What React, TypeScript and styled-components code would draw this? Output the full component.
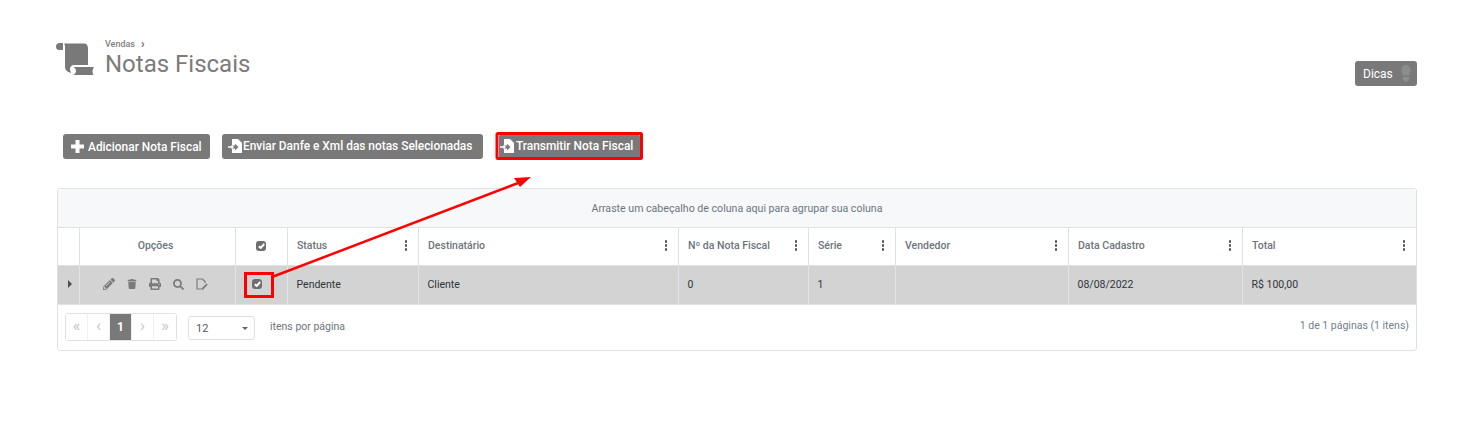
import { createGlobalStyle, styled } from "styled-components";
import { FaPencilAlt, FaPrint, FaSearch, FaTrash } from "react-icons/fa";

const GlobalStyle = createGlobalStyle`
  html, body { margin: 0; padding: 0; background: #fff; }
  body { font-family: Roboto, "Liberation Sans", sans-serif; overflow: hidden; }
`;

const COLUMNS = "22px 156px 52px 131px 260px 130px 87px 173px 174px 173px";
const GREY = "#797979";
const LINE = "#dee2e6";

const Page = styled.div`
  position: relative;
  width: 1459px;
  height: 439px;
  box-sizing: border-box;
  padding: 38px 42px 0 57px;
`;

const Header = styled.header`
  display: flex;
  justify-content: space-between;
  height: 96px;
`;

const TitleGroup = styled.div`
  display: flex;
  gap: 11px;
`;

const TitleText = styled.div`
  display: flex;
  flex-direction: column;
`;

const Crumb = styled.div`
  display: flex;
  align-items: center;
  gap: 6px;
  height: 12px;
  font-size: 9px;
  font-weight: 500;
  color: #7f7f7f;
  & > b {
    font-size: 12px;
    line-height: 10px;
    color: #6a6a6a;
  }
`;

const Title = styled.h1`
  margin: 0;
  font-size: 24px;
  line-height: 28px;
  font-weight: 400;
  color: #7b7b7b;
`;

const Dicas = styled.button`
  display: flex;
  align-items: center;
  gap: 8px;
  margin-top: 23px;
  width: 62px;
  height: 25px;
  padding: 0 0 0 8px;
  border: 0;
  border-radius: 3px;
  background: ${GREY};
  color: #fff;
  font: 400 12px Roboto, sans-serif;
`;

const Toolbar = styled.div`
  display: flex;
  gap: 12px;
  padding-left: 6px;
  height: 54px;
`;

const ActionButton = styled.button<{ $w: number; $pad: number; $gap: number; $after?: number; $lift?: boolean }>`
  display: flex;
  align-items: center;
  gap: ${(p) => p.$gap}px;
  box-sizing: border-box;
  width: ${(p) => p.$w}px;
  height: 25px;
  padding: 0 0 ${(p) => (p.$lift ? 2 : 0)}px ${(p) => p.$pad}px;
  border: 0;
  border-radius: 3px;
  background: ${GREY};
  color: #fff;
  font: 500 11.9px Roboto, sans-serif;
  white-space: nowrap;
  margin-left: ${(p) => p.$after ?? 0}px;
`;

const Card = styled.section`
  width: 1360px;
  box-sizing: border-box;
  border: 1px solid ${LINE};
  border-radius: 3px;
  color: #6c757d;
  font-size: 10.5px;
`;

const GroupBar = styled.div`
  height: 38px;
  display: flex;
  align-items: center;
  justify-content: center;
  background: #f7f8fa;
  border-bottom: 1px solid ${LINE};
  font-size: 10.6px;
  color: #6b7680;
`;

const Row = styled.div<{ $head?: boolean }>`
  display: grid;
  grid-template-columns: ${COLUMNS};
  height: ${(p) => (p.$head ? 37 : 38)}px;
  background: ${(p) => (p.$head ? "#fff" : "#d3d3d3")};
  border-bottom: 1px solid ${LINE};
  color: ${(p) => (p.$head ? "#6c757d" : "#2f3439")};
`;

const Cell = styled.div<{ $head?: boolean }>`
  display: flex;
  align-items: center;
  justify-content: space-between;
  box-sizing: border-box;
  padding: 0 11px 2px ${(p) => (p.$head ? 9 : 8.5)}px;
  border-right: 1px solid ${(p) => (p.$head ? LINE : "#e4e4e4")};
  font-weight: ${(p) => (p.$head ? 500 : 400)};
  &:last-child { border-right: 0; }
`;

const CenterCell = styled(Cell)<{ $nudge?: number }>`
  justify-content: center;
  padding: 0 ${(p) => p.$nudge ?? 0}px 2px 0;
`;

const Kebab = styled.span`
  display: grid;
  gap: 1.5px;
  & > i {
    display: block;
    width: 2.5px;
    height: 2.5px;
    border-radius: 50%;
    background: #4a5259;
  }
`;

const OptionIcons = styled.div`
  display: flex;
  align-items: center;
  gap: 12px;
  color: #7b7b7b;
`;

const CheckBox = styled.span`
  display: flex;
  align-items: center;
  justify-content: center;
  width: 10px;
  height: 10px;
  border-radius: 3px;
  background: #6e6e6e;
`;

const Caret = styled.span`
  width: 0;
  height: 0;
  margin-left: 3px;
  border-left: 4.5px solid #4a4f54;
  border-top: 4px solid transparent;
  border-bottom: 4px solid transparent;
`;

const Pager = styled.div`
  display: flex;
  align-items: center;
  height: 43px;
  padding: 0 7px 2px;
`;

const PageLinks = styled.div`
  display: flex;
  height: 28px;
  box-sizing: border-box;
  border: 1px solid ${LINE};
  border-radius: 3px;
`;

const PageLink = styled.span<{ $active?: boolean }>`
  display: flex;
  align-items: center;
  justify-content: center;
  width: 22px;
  box-sizing: border-box;
  border-right: 1px solid #eef0f2;
  background: ${(p) => (p.$active ? GREY : "#fff")};
  color: ${(p) => (p.$active ? "#fff" : "#c4c8cc")};
  font-size: ${(p) => (p.$active ? 12 : 17)}px;
  font-weight: ${(p) => (p.$active ? 700 : 400)};
  padding-bottom: ${(p) => (p.$active ? 0 : 3)}px;
  &:last-child { border-right: 0; }
`;

const PageSize = styled.div`
  display: flex;
  align-items: center;
  justify-content: space-between;
  box-sizing: border-box;
  width: 67px;
  height: 24px;
  margin: 3px 15px 0 11px;
  padding: 1px 6px 0 7px;
  border: 1px solid ${LINE};
  border-radius: 3px;
  color: #555c63;
  font-size: 11px;
  &::after {
    content: "";
    border-top: 3px solid #666;
    border-left: 3px solid transparent;
    border-right: 3px solid transparent;
  }
`;

const PagerInfo = styled.span`
  margin-left: auto;
  padding-bottom: 2px;
  color: #71808f;
`;

const Overlay = styled.svg`
  position: absolute;
  inset: 0;
  pointer-events: none;
`;

const ScrollIcon = () => (
  <svg width="38" height="32" viewBox="0 0 38 32" fill={GREY} style={{ marginLeft: -1, marginTop: 5 }}>
    <path d="M3.500 0H7V7H3C1 7 0 5.500 0 3.500 0 1.500 1.500 0 3.500 0z" />
    <path d="M8 .5H28C30.500 .5 32 2.500 32 5V22H18C15.500 22 14 24 14 26 14 28 15 29 15 30 11 29 9 27 9 24V5C9 3 9 2 8 .5z" />
    <path d="M17.500 24H38C37 26 36.500 27 36.500 28.500 36.500 30 37 31 37.500 32H17C19 31 20 29.500 20 28 20 26.500 19 25 17.500 24z" />
  </svg>
);

const PlusIcon = () => (
  <svg width="13" height="13" viewBox="0 0 13 13" fill="#fff" style={{ marginRight: 3 }}>
    <path d="M4.500 0h4v4.500H13v4H8.500V13h-4V8.500H0v-4h4.500z" />
  </svg>
);

const SendIcon = () => (
  <svg width="14" height="14" viewBox="0 0 14 14" fill="#fff">
    <path d="M4 0h6l4 4v10H4V9.500h3V11.500L10.500 8 7 4.800V6.500H4z" />
    <path d="M0 7.300h3.500V5.800L6 8 3.500 10.200V8.700H0z" />
  </svg>
);

const Check = () => (
  <svg width="7" height="6" viewBox="0 0 7 6">
    <path d="M.8 3.200 2.700 5 6.200 1" fill="none" stroke="#fff" strokeWidth="1.900" />
  </svg>
);

const NoteEdit = () => (
  <svg width="12" height="12" viewBox="0 0 12 12" fill="none" stroke="#7b7b7b" strokeWidth="1.200">
    <path d="M6.500 11H1V1h5.500L9 3.500V5" />
    <path d="M6 10 10.500 5.500l1.200 1.200L7.200 11.500 6 11.500z" fill="#7b7b7b" stroke="none" />
  </svg>
);

const Footprint = () => (
  <svg width="10" height="17" viewBox="0 0 10 17" fill="#8c8c8c">
    <path d="M5 0c3 0 4.500 2 4.500 5 0 2-.8 3.500-1 5.500h-7C1.300 8.500.5 7 .5 5 .5 2 2 0 5 0z" />
    <path d="M1.600 12h6.800c0 2.800-1.400 5-3.400 5s-3.400-2.200-3.400-5z" />
  </svg>
);

const ColumnHead = ({ label }: { label: string }) => (
  <Cell $head>
    {label}
    <Kebab>
      <i />
      <i />
      <i />
    </Kebab>
  </Cell>
);

const heads = ["Status", "Destinatário", "Nº da Nota Fiscal", "Série", "Vendedor", "Data Cadastro", "Total"];
const values = ["Pendente", "Cliente", "0", "1", "", "08/08/2022", "R$ 100,00"];

export default function App() {
  return (
    <Page>
      <GlobalStyle />
      <Header>
        <TitleGroup>
          <ScrollIcon />
          <TitleText>
            <Crumb>
              Vendas <b>›</b>
            </Crumb>
            <Title>Notas Fiscais</Title>
          </TitleText>
        </TitleGroup>
        <Dicas>
          Dicas <Footprint />
        </Dicas>
      </Header>
      <Toolbar>
        <ActionButton $w={147} $pad={8} $gap={1}>
          <PlusIcon /> Adicionar Nota Fiscal
        </ActionButton>
        <ActionButton $w={261} $pad={6} $gap={1} $lift>
          <SendIcon /> Enviar Danfe e Xml das notas Selecionadas
        </ActionButton>
        <ActionButton $w={141} $pad={1} $gap={2} $after={4} $lift>
          <SendIcon /> Transmitir Nota Fiscal
        </ActionButton>
      </Toolbar>
      <Card>
        <GroupBar>Arraste um cabeçalho de coluna aqui para agrupar sua coluna</GroupBar>
        <Row $head>
          <CenterCell $head />
          <CenterCell $head $nudge={4}>
            Opções
          </CenterCell>
          <CenterCell $head $nudge={1}>
            <CheckBox>
              <Check />
            </CheckBox>
          </CenterCell>
          {heads.map((h) => (
            <ColumnHead key={h} label={h} />
          ))}
        </Row>
        <Row>
          <CenterCell>
            <Caret />
          </CenterCell>
          <CenterCell $nudge={4}>
            <OptionIcons>
              <FaPencilAlt size={12} />
              <FaTrash size={10} />
              <FaPrint size={12} />
              <FaSearch size={11} />
              <NoteEdit />
            </OptionIcons>
          </CenterCell>
          <CenterCell $nudge={9}>
            <CheckBox>
              <Check />
            </CheckBox>
          </CenterCell>
          {values.map((v, i) => (
            <Cell key={i}>{v}</Cell>
          ))}
        </Row>
        <Pager>
          <PageLinks>
            <PageLink>«</PageLink>
            <PageLink>‹</PageLink>
            <PageLink $active>1</PageLink>
            <PageLink>›</PageLink>
            <PageLink>»</PageLink>
          </PageLinks>
          <PageSize>12</PageSize>
          itens por página
          <PagerInfo>1 de 1 páginas (1 itens)</PagerInfo>
        </Pager>
      </Card>
      <Overlay width="1459" height="439" viewBox="0 0 1459 439">
        <rect x="497" y="133.500" width="144.500" height="25" rx="1" fill="none" stroke="#f00" strokeWidth="3" />
        <rect x="245.500" y="273.500" width="27" height="23" fill="none" stroke="#f00" strokeWidth="3" />
        <path d="M272 277 518 183" stroke="#f00" strokeWidth="2.500" fill="none" />
        <path d="M531 177 514 178 520 187z" fill="#f00" />
      </Overlay>
    </Page>
  );
}
